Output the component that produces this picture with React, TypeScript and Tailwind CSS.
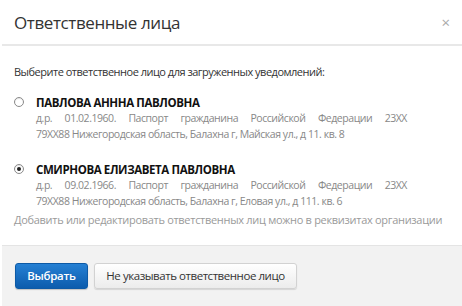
const people = [
  {
    name: "ПАВЛОВА АНННА ПАВЛОВНА",
    line1: "д.р. 01.02.1960. Паспорт гражданина Российской Федерации 23XX",
    line2: "79XX88 Нижегородская область, Балахна г, Майская ул., д 11. кв. 8",
    checked: false,
  },
  {
    name: "СМИРНОВА ЕЛИЗАВЕТА ПАВЛОВНА",
    line1: "д.р. 09.02.1966. Паспорт гражданина Российской Федерации 23XX",
    line2: "79XX88 Нижегородская область, Балахна г, Еловая ул., д 111. кв. 6",
    checked: true,
  },
];

function Radio({ checked }: { checked: boolean }) {
  return (
    <span className="mt-[2px] flex h-[10px] w-[10px] shrink-0 items-center justify-center rounded-full border border-[#8a8a8a] bg-white shadow-[inset_0_1px_1px_rgba(0,0,0,0.1)]">
      {checked && <span className="h-[4px] w-[4px] rounded-full bg-[#222]" />}
    </span>
  );
}

export default function App() {
  return (
    <div
      className="h-[306px] w-[462px] overflow-hidden bg-white pl-[2px]"
      style={{ fontFamily: '"Open Sans", "Noto Sans", sans-serif' }}
    >
      <div className="flex h-full flex-col">
        <div className="flex h-[46px] shrink-0 items-center justify-between border-b-2 border-[#e8e8e8] pl-[12px] pr-[12px]">
          <h1 className="text-[17px] leading-none tracking-[-0.4px] text-[#333]">Ответственные лица</h1>
          <span className="mt-[0px] text-[15px] leading-none text-[#aaa]">×</span>
        </div>

        <div className="flex flex-1 flex-col pl-[12px] pr-[10px] pt-[18px]">
          <p className="text-[11px] leading-[15px] tracking-[-0.5px] text-[#333]">
            Выберите ответственное лицо для загруженных уведомлений:
          </p>

          <div className="mt-[16px] flex flex-col gap-[19px]">
            {people.map((p) => (
              <div key={p.name} className="flex gap-[12px]">
                <Radio checked={p.checked} />
                <div className="flex w-[371px] flex-col">
                  <span className="text-[11.5px] font-bold leading-[16px] tracking-[-0.4px] text-[#111]">
                    {p.name}
                  </span>
                  <span className="text-justify text-[10.5px] leading-[14px] tracking-[-0.45px] text-[#888] [text-align-last:justify]">
                    {p.line1}
                  </span>
                  <span className="whitespace-nowrap text-[10.5px] leading-[18px] tracking-[-0.45px] text-[#888]">
                    {p.line2}
                  </span>
                </div>
              </div>
            ))}
          </div>

          <p className="mt-[1px] whitespace-nowrap text-[11px] leading-[18px] tracking-[-0.3px] text-[#9a9a9a]">
            Добавить или редактировать ответственных лиц можно в реквизитах организации
          </p>
        </div>

        <div className="flex h-[61px] shrink-0 items-center gap-[6px] border-t border-[#e4e4e4] bg-[#f2f2f2] pl-[13px]">
          <button className="h-[26px] w-[73px] rounded-[3px] border border-[#0d5aa6] bg-gradient-to-b from-[#2580d4] to-[#0c5cad] text-[11.5px] font-semibold tracking-[-0.3px] text-white shadow-[0_1px_1px_rgba(0,0,0,0.2)]">
            Выбрать
          </button>
          <button className="h-[26px] w-[203px] rounded-[3px] border border-[#d2d2d2] bg-gradient-to-b from-[#ffffff] to-[#ececec] text-[11.5px] tracking-[-0.45px] text-[#333] shadow-[0_1px_1px_rgba(0,0,0,0.12)]">
            Не указывать ответственное лицо
          </button>
        </div>
      </div>
    </div>
  );
}
